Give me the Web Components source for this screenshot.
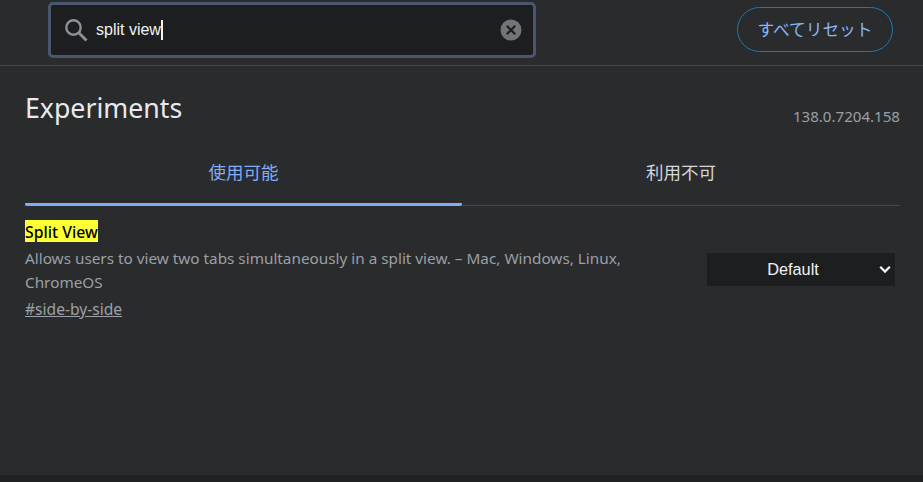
<!DOCTYPE html>
<html>
<head>
<meta charset="utf-8">
<title>Experiments</title>
<style>
  html, body { margin: 0; padding: 0; height: 100%; background: #2a2b2d; overflow: hidden; }
  body { font-family: "Noto Sans", "Noto Sans CJK JP", sans-serif; }
  flags-app { height: 482px; }
</style>
</head>
<body>
<flags-app>
  <flags-header slot="header"></flags-header>
  <flags-title version="138.0.7204.158">Experiments</flags-title>
  <flags-tabs></flags-tabs>
  <flag-row hash="#side-by-side" name="Split View">
    Allows users to view two tabs simultaneously in a split view. – Mac, Windows, Linux, ChromeOS
  </flag-row>
</flags-app>

<script>
class FlagsApp extends HTMLElement {
  constructor(){
    super();
    this.attachShadow({mode: 'open'});
    this.shadowRoot.innerHTML = `
    <style>
      :host { display: flex; flex-direction: column; background: #2a2b2d; }
      .main { flex: 1; padding: 0 23px 0 25px; display: flex; flex-direction: column; }
      .foot { height: 7px; background: #202124; }
    </style>
    <slot name="header"></slot>
    <div class="main"><slot></slot></div>
    <div class="foot"></div>`;
  }
}

class FlagsHeader extends HTMLElement {
  constructor(){
    super();
    this.attachShadow({mode: 'open'});
    this.shadowRoot.innerHTML = `
    <style>
      :host { display: flex; align-items: flex-start; justify-content: space-between;
        border-bottom: 1px solid #46474a; padding: 2px 30px 0 48px; box-sizing: border-box; height: 66px; }
      .search { width: 488px; height: 56px; box-sizing: border-box; border: 3px solid #49566f; border-radius: 5px;
        background: #1d1e20; display: flex; align-items: center; padding: 0 11px 0 12px; }
      .search svg.glass { width: 26px; height: 26px; flex: none; }
      .text { margin-left: 7px; flex: 1; font: 16px "Liberation Sans", sans-serif; color: #f1f3f4; display: flex; align-items: center; }
      .caret { width: 2px; height: 20px; background: #f1f3f4; }
      .clear { width: 22px; height: 22px; flex: none; }
      button { margin-top: 5px; width: 156px; height: 45px; border: 1px solid #1f78b4; border-radius: 23px; background: transparent;
        color: #8ab4f8; font: 16.7px "Noto Sans CJK JP", sans-serif; padding: 0 0 2px; }
    </style>
    <div class="search">
      <svg class="glass" viewBox="0 0 26 26" fill="none" stroke="#8e9094" stroke-width="2.4">
        <circle cx="10.5" cy="10.5" r="7.2"/><path d="M15.8 15.8 L23.5 23.5" stroke-width="3"/>
      </svg>
      <div class="text"><span>split view</span><span class="caret"></span></div>
      <svg class="clear" viewBox="0 0 22 22">
        <circle cx="11" cy="11" r="10.5" fill="#727477"/>
        <path d="M6.8 6.8 L15.2 15.2 M15.2 6.8 L6.8 15.2" stroke="#1d1e20" stroke-width="2.2"/>
      </svg>
    </div>
    <button>すべてリセット</button>`;
  }
}

class FlagsTitle extends HTMLElement {
  constructor(){
    super();
    this.attachShadow({mode: 'open'});
    this.shadowRoot.innerHTML = `
    <style>
      :host { display: flex; justify-content: space-between; align-items: flex-end; height: 64px; }
      .h { font-size: 26.7px; line-height: 34px; color: #e8eaed; margin-bottom: 5px; }
      .v { font-size: 15.1px; line-height: 19px; color: #9aa0a6; margin-bottom: 4px; }
    </style>
    <div class="h"><slot></slot></div>
    <div class="v">${this.getAttribute('version')}</div>`;
  }
}

class FlagsTabs extends HTMLElement {
  constructor(){
    super();
    this.attachShadow({mode: 'open'});
    this.shadowRoot.innerHTML = `
    <style>
      :host { display: flex; margin-top: 10px; height: 66px; border-bottom: 1px solid #46474a; box-sizing: border-box;
        font: 17.5px "Noto Sans CJK JP", sans-serif; }
      div { flex: 1; height: 66px; display: flex; align-items: center; justify-content: center; box-sizing: border-box; color: #d4d6d9;
        border-bottom: 3px solid transparent; }
      .on { color: #7fadf6; border-bottom-color: #7fadf6; border-radius: 0 0 2px 2px; flex: 0 0 437px; }
    </style>
    <div class="on">使用可能</div>
    <div>利用不可</div>`;
  }
}

class FlagRow extends HTMLElement {
  constructor(){
    super();
    this.attachShadow({mode: 'open'});
    this.shadowRoot.innerHTML = `
    <style>
      :host { display: flex; justify-content: space-between; align-items: center; padding-top: 14px; padding-right: 5px; }
      .info { width: 612px; }
      .name { font-size: 15.8px; font-weight: 500; height: 26px; }
      mark { background: #ffff36; color: #000; display: inline-block; height: 22px; line-height: 24px; vertical-align: top; }
      .desc { font-size: 15.3px; line-height: 24px; color: #9aa0a6; }
      a { display: inline-block; font-size: 15.6px; line-height: 24px; margin-top: 3px; color: #9aa0a6; text-decoration: underline; }
      .sel { width: 188px; height: 33px; background: #1d1e20; color: #f1f3f4; font: 16.3px "Liberation Sans", sans-serif;
        display: flex; align-items: center; justify-content: center; position: relative; margin-top: -3px; padding-right: 16px; box-sizing: border-box; }
      .sel svg { position: absolute; right: 4px; top: 12px; width: 12px; height: 9px; }
    </style>
    <div class="info">
      <div class="name"><mark>${this.getAttribute('name')}</mark></div>
      <div class="desc"><slot></slot></div>
      <a>${this.getAttribute('hash')}</a>
    </div>
    <div class="sel">Default
      <svg viewBox="0 0 12 9" fill="none" stroke="#f1f3f4" stroke-width="2.2"><path d="M1.2 1.8 L6 6.6 L10.8 1.8"/></svg>
    </div>`;
  }
}

customElements.define('flags-app', FlagsApp);
customElements.define('flags-header', FlagsHeader);
customElements.define('flags-title', FlagsTitle);
customElements.define('flags-tabs', FlagsTabs);
customElements.define('flag-row', FlagRow);
</script>
</body>
</html>
